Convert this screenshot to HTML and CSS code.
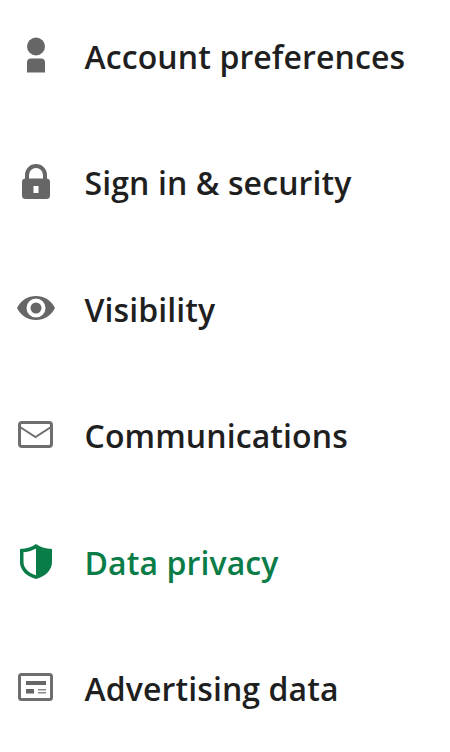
FILE: index.html
```html
<!DOCTYPE html>
<html lang="en">
<head>
<meta charset="utf-8">
<title>Settings</title>
<link rel="stylesheet" href="styles.css">
</head>
<body>
<nav class="menu">
  <a class="item">
    <svg class="icon" viewBox="0 0 48 48"><circle cx="24" cy="15.5" r="9"/><path d="M19 27.5h10a4 4 0 0 1 4 4v10H15v-10a4 4 0 0 1 4-4z"/></svg>
    <span class="label">Account preferences</span>
  </a>
  <a class="item">
    <svg class="icon" viewBox="0 0 48 48"><path fill-rule="evenodd" d="M24 7a11 11 0 0 1 11 11v3.500h-0.500a3.500 3.500 0 0 1 3.500 3.500v13.500a3.500 3.500 0 0 1-3.500 3.500h-21a3.500 3.500 0 0 1-3.500-3.500V25a3.500 3.500 0 0 1 3.500-3.500H13V18A11 11 0 0 1 24 7zm0 4a7 7 0 0 0-7 7v3.500h14V18a7 7 0 0 0-7-7zM21.500 29v7h5v-7z"/></svg>
    <span class="label">Sign in &amp; security</span>
  </a>
  <a class="item">
    <svg class="icon" viewBox="0 0 48 48"><path fill-rule="evenodd" d="M5 24C9 16 16 12 24 12s15 4 19 12c-4 8-11 12-19 12S9 32 5 24zm19-9.500a9.500 9.500 0 1 0 0 19 9.500 9.500 0 0 0 0-19z"/><circle cx="24" cy="24" r="5.500"/></svg>
    <span class="label">Visibility</span>
  </a>
  <a class="item">
    <svg class="icon" viewBox="0 0 48 48"><rect class="line" x="7.500" y="12.500" width="32" height="24" rx="2.500"/><path class="line thin" d="M8 17l15.500 10L39 17"/></svg>
    <span class="label">Communications</span>
  </a>
  <a class="item active">
    <svg class="icon" viewBox="0 0 48 48"><path fill-rule="evenodd" d="M24 7c4 3 9 4.500 16 5v13c0 8-6 14-16 17C14 39 8 33 8 25V12c7-.5 12-2 16-5zm0 4.500c-3.500 2-7 3.300-12.500 3.800V25c0 6 4.500 10.500 12.500 13.300z"/></svg>
    <span class="label">Data privacy</span>
  </a>
  <a class="item">
    <svg class="icon" viewBox="0 0 48 48"><rect class="line" x="7.500" y="11.500" width="32" height="25" rx="2"/><rect x="14" y="18" width="20" height="4"/><rect x="14" y="26" width="8" height="4.500"/><rect class="soft" x="26" y="26" width="8" height="1.500"/><rect class="soft" x="26" y="29" width="8" height="1.500"/></svg>
    <span class="label">Advertising data</span>
  </a>
</nav>
</body>
</html>
```

FILE: styles.css
```css
html, body {
  margin: 0;
  background: #fff;
}
.menu {
  display: flex;
  flex-direction: column;
  gap: 78.5px;
  padding: 30.5px 0 0 12px;
  font-family: "Open Sans", "Noto Sans", sans-serif;
}
.item {
  display: flex;
  align-items: flex-start;
  gap: 24.5px;
  height: 48px;
  color: #1f1f1f;
}
.icon {
  flex: none;
  width: 48px;
  height: 48px;
  fill: #666;
}
.line {
  fill: none;
  stroke: #6e6e6e;
  stroke-width: 3;
}
.thin {
  stroke-width: 2;
}
.soft {
  fill: #8a8a8a;
}
.label {
  padding-top: 5px;
  font-size: 32px;
  font-weight: 600;
  line-height: 42px;
  letter-spacing: 0.1px;
  white-space: nowrap;
}
.active {
  color: #0a7c47;
}
.active .icon {
  fill: #0a7c47;
}
```
